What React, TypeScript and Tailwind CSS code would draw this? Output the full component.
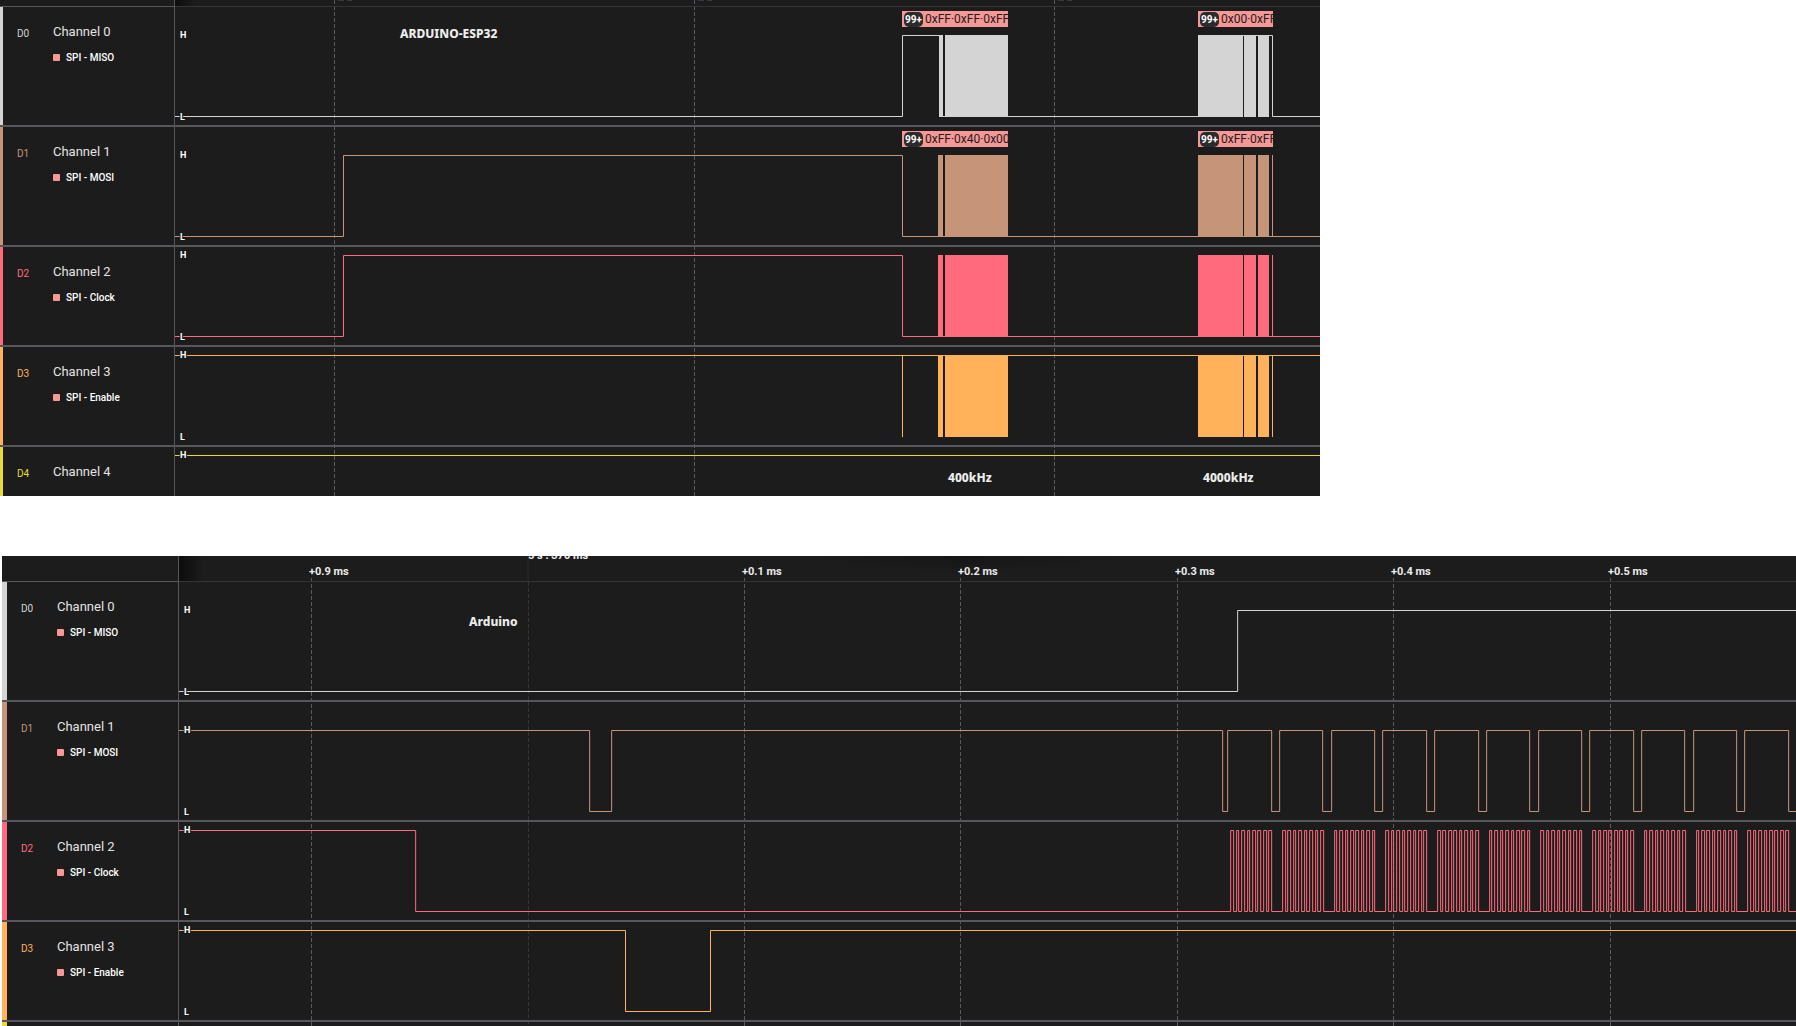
import { clsx } from "clsx";

type Level = 0 | 1;

interface Block {
  x: number;
  width: number;
}

interface Badge {
  text: string;
  className: string;
}

interface Note {
  text: string;
  x: number;
  y: number;
}

interface Channel {
  id: string;
  name: string;
  signal?: string;
  start: Level;
  edges: number[];
  soft?: boolean;
  blocks?: Block[];
  badges?: Badge[];
  notes?: Note[];
}

const channelStyles: Record<string, { bar: string; text: string; stroke: string; fill: string }> = {
  D0: { bar: "bg-[#d4d4d4]", text: "text-[#d4d4d4]", stroke: "stroke-[#d4d4d4]", fill: "fill-[#d4d4d4]" },
  D1: { bar: "bg-[#c69479]", text: "text-[#c69479]", stroke: "stroke-[#c69479]", fill: "fill-[#c69479]" },
  D2: { bar: "bg-[#ff6b7c]", text: "text-[#ff6b7c]", stroke: "stroke-[#ff6b7c]", fill: "fill-[#ff6b7c]" },
  D3: { bar: "bg-[#ffb259]", text: "text-[#ffb259]", stroke: "stroke-[#ffb259]", fill: "fill-[#ffb259]" },
  D4: { bar: "bg-[#e4dc36]", text: "text-[#e4dc36]", stroke: "stroke-[#e4dc36]", fill: "fill-[#e4dc36]" },
};

// Bursts too dense to resolve at this zoom level are drawn as solid blocks
const bursts: Block[] = [
  { x: 763, width: 5 },
  { x: 770, width: 63 },
  { x: 1023, width: 45 },
  { x: 1069, width: 12 },
  { x: 1083, width: 11 },
];

const FIRST_BADGE = "left-[727px] w-[106px]";
const SECOND_BADGE = "left-[1023px] w-[75px]";

const espChannels: Channel[] = [
  {
    id: "D0",
    name: "Channel 0",
    signal: "SPI - MISO",
    start: 0,
    // MISO stays high between the blocks of the second burst
    edges: [727, 764, 1023, 1097],
    blocks: [{ x: 764, width: 4 }, ...bursts.slice(1)],
    badges: [
      { text: "0xFF·0xFF·0xFF", className: FIRST_BADGE },
      { text: "0x00·0xFF", className: SECOND_BADGE },
    ],
    notes: [{ text: "ARDUINO-ESP32", x: 225, y: 31 }],
  },
  {
    id: "D1",
    name: "Channel 1",
    signal: "SPI - MOSI",
    start: 0,
    edges: [168, 727],
    blocks: [...bursts, { x: 1097, width: 1 }],
    badges: [
      { text: "0xFF·0x40·0x00", className: FIRST_BADGE },
      { text: "0xFF·0xFF", className: SECOND_BADGE },
    ],
  },
  {
    id: "D2",
    name: "Channel 2",
    signal: "SPI - Clock",
    start: 0,
    edges: [168, 727],
    blocks: [...bursts, { x: 1097, width: 1 }],
  },
  {
    id: "D3",
    name: "Channel 3",
    signal: "SPI - Enable",
    start: 1,
    edges: [],
    blocks: [{ x: 727, width: 1 }, ...bursts, { x: 1097, width: 1 }],
  },
  {
    id: "D4",
    name: "Channel 4",
    start: 1,
    edges: [],
    notes: [
      { text: "400kHz", x: 773, y: 35 },
      { text: "4000kHz", x: 1028, y: 35 },
    ],
  },
];

const BYTE = 51.7;

const mosiEdges = [410, 432, 1043, 1048];
for (let i = 0; i < 11; i++) {
  mosiEdges.push(Math.round(1091.7 + BYTE * i), Math.round(1100 + BYTE * i));
}

const clockEdges = [236];
for (let i = 0; i < 11; i++) {
  for (let bit = 0; bit < 8; bit++) {
    const rise = 1051.2 + BYTE * i + 5.45 * bit;
    clockEdges.push(Math.round(rise), Math.round(rise + 2.6));
  }
}

const arduinoChannels: Channel[] = [
  {
    id: "D0",
    name: "Channel 0",
    signal: "SPI - MISO",
    start: 0,
    edges: [1058],
    soft: true,
    notes: [{ text: "Arduino", x: 290, y: 44 }],
  },
  { id: "D1", name: "Channel 1", signal: "SPI - MOSI", start: 1, edges: mosiEdges, soft: true },
  { id: "D2", name: "Channel 2", signal: "SPI - Clock", start: 1, edges: clockEdges, soft: true },
  { id: "D3", name: "Channel 3", signal: "SPI - Enable", start: 1, edges: [446, 531] },
  { id: "D4", name: "Channel 4", start: 1, edges: [] },
];

function wavePath(channel: Channel, high: number, low: number) {
  const shift = channel.soft ? 0.65 : 0.5;
  let level = channel.start;
  let d = `M0 ${level ? high : low}`;
  for (const edge of channel.edges) {
    level = level ? 0 : 1;
    d += `H${edge + shift}V${level ? high : low}`;
  }
  return d + "H4000";
}

function LevelLabel({ text, y }: { text: string; y: number }) {
  return (
    <text x={5} y={y} className="fill-white stroke-[#1a1a1a] stroke-2 text-[9px] font-bold [paint-order:stroke]">
      {text}
    </text>
  );
}

function Trace({ channel, tall }: { channel: Channel; tall: boolean }) {
  const style = channelStyles[channel.id];
  const top = tall ? 28 : 8;
  const bottom = top + 81;

  return (
    <svg className="block h-full w-full font-['Roboto',sans-serif]" aria-hidden="true">
      <path d={wavePath(channel, top + 0.5, bottom + 0.5)} fill="none" className={style.stroke} />
      {channel.blocks?.map((block) => (
        <rect key={block.x} x={block.x} y={top} width={block.width} height={82} className={style.fill} />
      ))}
      <LevelLabel text="H" y={top + 3} />
      {channel.id !== "D4" && <LevelLabel text="L" y={bottom + 4} />}
      {channel.notes?.map((note) => (
        <text
          key={note.text}
          x={note.x}
          y={note.y}
          className="fill-[#ececec] font-['Noto_Sans',sans-serif] text-[12px] font-extrabold"
        >
          {note.text}
        </text>
      ))}
    </svg>
  );
}

function DataBadge({ badge }: { badge: Badge }) {
  return (
    <div
      className={clsx(
        "absolute top-1 flex h-4 items-center gap-[2px] overflow-hidden bg-[#f79796] pl-[2px] whitespace-nowrap",
        badge.className
      )}
    >
      <span className="mt-px flex h-[15px] w-[19px] shrink-0 items-center justify-center rounded-[5px] bg-[#2b2b2e] text-[10px] font-bold text-white">
        99+
      </span>
      <span className="text-[12px] leading-4 text-[#1c1c1c]">{badge.text}</span>
    </div>
  );
}

function ChannelRow({ channel, barWidth, className }: { channel: Channel; barWidth: string; className: string }) {
  const style = channelStyles[channel.id];
  const tall = channel.id === "D0" || channel.id === "D1";

  return (
    <div className={clsx("relative flex shrink-0 overflow-hidden border-[#56565b]", className)}>
      <div className={clsx("shrink-0", barWidth, style.bar)} />
      <div className="flex w-[172px] shrink-0 border-r border-[#56565b] pt-[17px] pl-[14px]">
        <span className={clsx("w-9 pt-[2px] text-[10px] leading-4", style.text)}>{channel.id}</span>
        <div>
          <div className="text-[13px] leading-4 text-[#e4e4e4]">{channel.name}</div>
          {channel.signal && (
            <div className="mt-[10px] flex items-center gap-[6px] text-[10px] leading-4 font-medium text-white">
              <span className="mb-px h-[7px] w-[7px] rounded-[1px] bg-[#f79796]" />
              {channel.signal}
            </div>
          )}
        </div>
      </div>
      <div className="relative min-w-0 flex-1">
        <Trace channel={channel} tall={tall} />
        {channel.badges?.map((badge) => (
          <DataBadge key={badge.className} badge={badge} />
        ))}
      </div>
    </div>
  );
}

function rowHeight(index: number) {
  return index < 2 ? "h-[120px] border-b-2" : "h-[100px] border-b-2";
}

function GridLine({ x, y, faint }: { x: number; y: number; faint?: boolean }) {
  return (
    <line
      x1={x + 0.5}
      x2={x + 0.5}
      y1={y}
      y2="100%"
      strokeDasharray="4 2"
      className={faint ? "stroke-[#34343a]" : "stroke-[#5a5a5e]"}
    />
  );
}

function EspCapture() {
  return (
    <section className="relative w-[73.5%] overflow-hidden bg-[#1c1c1c]" aria-label="ESP32 capture">
      <svg className="absolute inset-0 h-full w-full" aria-hidden="true">
        {[334, 694, 1054].map((x) => (
          <g key={x}>
            <GridLine x={x} y={0} />
            <rect x={x + 4} y={0} width={6} height={1} className="fill-[#3a3a3d]" />
            <rect x={x + 13} y={0} width={5} height={1} className="fill-[#3a3a3d]" />
          </g>
        ))}
      </svg>
      <div className="relative flex h-[7px]">
        <div className="w-[175px] border-r border-b border-[#56565b]" />
        <div className="flex-1 border-b border-[#33333a]">
          <div className="h-full w-5 bg-linear-to-r from-[#0c0c0c] to-transparent" />
        </div>
      </div>
      {espChannels.map((channel, i) => (
        <ChannelRow
          key={channel.id}
          channel={channel}
          barWidth="w-[3px]"
          className={i === 4 ? "h-[49px]" : rowHeight(i)}
        />
      ))}
    </section>
  );
}

const ticks = [
  { x: 309, label: "+0.9 ms" },
  { x: 742, label: "+0.1 ms" },
  { x: 958, label: "+0.2 ms" },
  { x: 1175, label: "+0.3 ms" },
  { x: 1391, label: "+0.4 ms" },
  { x: 1608, label: "+0.5 ms" },
];

function ArduinoCapture() {
  return (
    <section
      className="relative ml-[2px] flex min-h-0 flex-1 flex-col overflow-hidden bg-[#1c1c1c]"
      aria-label="Arduino capture"
    >
      <svg className="absolute inset-0 h-full w-full" aria-hidden="true">
        {ticks.map((tick) => (
          <GridLine key={tick.x} x={tick.x} y={22} />
        ))}
        <GridLine x={526} y={26} faint />
        <line x1={526} x2={526} y1={5} y2={25} className="stroke-[#2c2c32]" />
      </svg>
      <div className="relative flex h-[26px] shrink-0">
        <div className="w-[177px] border-r border-b border-[#56565b]" />
        <div className="relative flex-1 border-b border-[#33333a]">
          <div className="h-full w-6 bg-linear-to-r from-[#0c0c0c] to-transparent" />
          <div className="absolute top-0 left-[640px] h-4 w-[290px] bg-radial-[at_50%_0%] from-[#151515] to-transparent to-70%" />
          <svg className="absolute inset-0 h-full w-full font-['Roboto',sans-serif]">
            <text x={349} y={3} className="fill-[#ececec] text-[11px] font-bold">
              5 s : 370 ms
            </text>
            {ticks.map((tick) => (
              <text key={tick.x} x={tick.x - 179} y={19} className="fill-[#ececec] text-[11px] font-bold">
                {tick.label}
              </text>
            ))}
          </svg>
        </div>
      </div>
      {arduinoChannels.map((channel, i) => (
        <ChannelRow key={channel.id} channel={channel} barWidth="w-[5px]" className={rowHeight(i)} />
      ))}
    </section>
  );
}

const App = () => {
  return (
    <main className="flex h-screen flex-col gap-[60px] overflow-hidden bg-white font-['Roboto',sans-serif]">
      <EspCapture />
      <ArduinoCapture />
    </main>
  );
};

export default App;
